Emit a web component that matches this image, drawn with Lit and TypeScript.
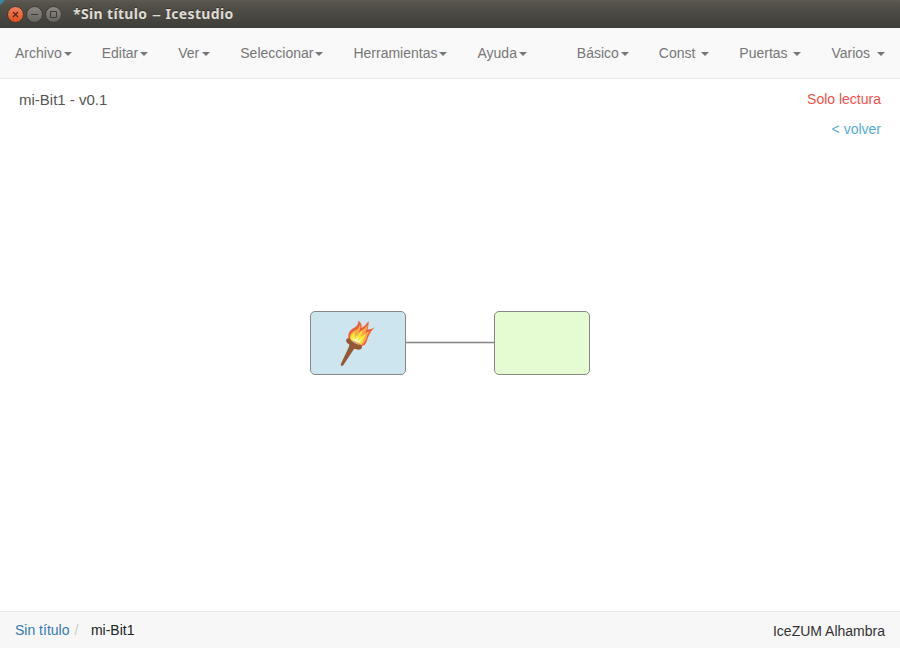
import { LitElement, html, css, svg } from "lit";
import { customElement } from "lit/decorators.js";

const LEFT_MENU = ["Archivo", "Editar", "Ver", "Seleccionar", "Herramientas", "Ayuda"];
const RIGHT_MENU = ["Básico", "Const ", "Puertas ", "Varios "];
// Labels whose caret stands one pixel further from the text.
const WIDE = ["Ver", "Varios "];

const torch = svg`
  <path d="M348.500 339 C347.500 333 350 330 354 328 C357 326 358.500 323.500 358.500 320.500 C361.500 323 362 325.500 361.500 328 C364 326.500 366.500 324.500 368.500 321 C369 324 368 327 367.500 329.500 C370 329.500 372.500 328.800 374.500 327.500 C371 331 369.500 334 368 337.500 C366.500 342 366 345 362 346 Z" fill="#ec5f36"/>
  <path d="M350 339 C349.500 334 352 331.500 356 330 C358.500 328.500 360 326 360 324 C361 328 359.500 330.500 359 332.500 C363 330 366 327.500 367.500 324.500 C367.500 328 366 331 365.500 333 C367.500 332 369 331.500 370 331 C366 335 367.500 339 364.500 342 C363.500 344 362 345 361 345.500 Z" fill="#fba94b"/>
  <path d="M351 340 C350 336 352 334 355 332 C355 334 355 335 355 337 C358 335 360 333 362 330 C362 333 361 335 361 337 C363 336 364 335 366 334 C363 338 364 341 361 344 Z" fill="#f8e737"/>
  <path d="M352.500 340 L353.500 337 L354.500 340 L358 336.500 L357.500 341 L361 338.500 L359.500 343 Z" fill="#fffbc0"/>
  <path d="M347 338.500 L349.500 338.500 C352 342 357 345 361.500 345 L362 347.500 C361 350 358.500 350.200 355.800 349 L354 349 L343.400 365 C342.300 366.600 340.500 366 340.800 364 L349 346.800 L349.300 344.600 C346 342.500 345.200 340.500 347 338.500 Z" fill="#955734"/>
`;

@customElement("app-root")
export class AppRoot extends LitElement {
  static styles = css`
    :host {
      display: flex;
      flex-direction: column;
      height: 648px;
      background: #fff;
      font: 14px/20px "Liberation Sans", Arial, sans-serif;
      color: #333;
    }
    .titlebar {
      flex: none;
      display: flex;
      align-items: center;
      height: 28px;
      box-sizing: border-box;
      padding-left: 7px;
      background:
        linear-gradient(135deg, #3a87a6 3px, transparent 4px),
        linear-gradient(#5d5b53 0, #55534b 3px, #3e3d38 100%);
    }
    .buttons {
      display: block;
      width: 66px;
      height: 28px;
    }
    .title {
      display: flex;
      font: bold 14px/28px "Noto Sans", "Open Sans", sans-serif;
      letter-spacing: 0.35px;
      color: #dfdbd2;
      white-space: nowrap;
      text-shadow: 0 -1px 0 #33322e;
    }
    .dash {
      width: 18px;
      text-align: center;
      font-size: 18px;
      font-weight: normal;
      letter-spacing: 0;
    }
    .navbar {
      flex: none;
      display: flex;
      justify-content: space-between;
      height: 50px;
      background: #f9f9f9;
      border-bottom: 1px solid #e7e7e7;
    }
    .menu {
      display: flex;
      margin: 0;
      padding: 0;
      list-style: none;
    }
    .item {
      padding: 15px;
      color: #777;
      white-space: pre;
    }
    .caret {
      display: inline-block;
      margin-left: 2px;
      vertical-align: middle;
      border-top: 4px solid;
      border-left: 4px solid transparent;
      border-right: 4px solid transparent;
    }
    .caret.wide {
      margin-left: 3px;
    }
    .workspace {
      flex: 1;
      position: relative;
      display: flex;
      justify-content: space-between;
      padding: 0 19px;
    }
    .diagram {
      position: absolute;
      left: 0;
      top: 0;
      width: 900px;
      height: 532px;
    }
    .name {
      padding-top: 11px;
      font-size: 15px;
      color: #555;
    }
    .side {
      display: flex;
      flex-direction: column;
      align-items: flex-end;
      gap: 10px;
      padding-top: 10px;
    }
    .readonly {
      color: #f2504b;
    }
    .back {
      color: #53aed6;
    }
    .footer {
      flex: none;
      display: flex;
      justify-content: space-between;
      height: 36px;
      padding: 0 15px;
      background: #f7f7f7;
      border-top: 1px solid #e7e7e7;
      line-height: 37px;
    }
    .crumbs {
      display: flex;
    }
    .link {
      color: #337ab7;
    }
    .slash {
      padding: 0 12.500px 0 5px;
      color: #ccc;
    }
    .current {
      color: #222;
    }
    .board {
      color: #333;
      line-height: 39px;
    }
  `;

  private menu(labels: string[]) {
    return html`<ul class="menu">
      ${labels.map(
        (l) => html`<li class="item">${l}<span class=${WIDE.includes(l) ? "caret wide" : "caret"}></span></li>`
      )}
    </ul>`;
  }

  render() {
    return html`
      <header class="titlebar">
        <svg class="buttons" viewBox="7 0 66 28">
          <defs>
            <linearGradient id="close" x2="0" y2="1">
              <stop offset="0" stop-color="#f58160" /><stop offset="1" stop-color="#df4f1c" />
            </linearGradient>
            <linearGradient id="plain" x2="0" y2="1">
              <stop offset="0" stop-color="#8b8981" /><stop offset="1" stop-color="#65635c" />
            </linearGradient>
          </defs>
          <g stroke="#393832">
            <circle cx="15.500" cy="14.500" r="8" fill="url(#close)" />
            <circle cx="34.500" cy="14.500" r="8" fill="url(#plain)" />
            <circle cx="53.500" cy="14.500" r="8" fill="url(#plain)" />
          </g>
          <g fill="none" stroke="#3c3b37">
            <path d="M13 12l5 5M18 12l-5 5" stroke-width="1.300" stroke="#54281a" />
            <path d="M31 14.500h7M50.500 11.500h6v6h-6z" />
          </g>
        </svg>
        <span class="title"><span>*Sin título</span><span class="dash">–</span><span>Icestudio</span></span>
      </header>
      <nav class="navbar">${this.menu(LEFT_MENU)}${this.menu(RIGHT_MENU)}</nav>
      <main class="workspace">
        <svg class="diagram" viewBox="0 79 900 532">
          <path d="M405 342.500H495" stroke="#ddd" stroke-width="3" />
          <path d="M405 342.500H495" stroke="#888" />
          <g stroke="#888">
            <rect x="310.500" y="311.500" width="95" height="63" rx="4.500" fill="#cce5ef" />
            <rect x="494.500" y="311.500" width="95" height="63" rx="4.500" fill="#e5fbd2" />
          </g>
          ${torch}
        </svg>
        <span class="name">mi-Bit1 - v0.1</span>
        <div class="side">
          <span class="readonly">Solo lectura</span>
          <span class="back">&lt; volver</span>
        </div>
      </main>
      <footer class="footer">
        <div class="crumbs">
          <span class="link">Sin título</span><span class="slash">/</span><span class="current">mi-Bit1</span>
        </div>
        <span class="board">IceZUM Alhambra</span>
      </footer>
    `;
  }
}
